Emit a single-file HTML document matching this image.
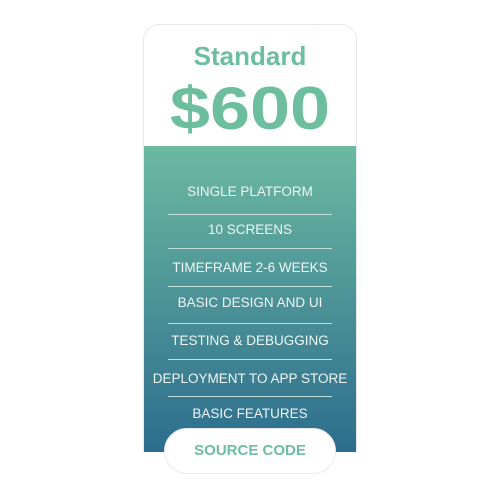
<!DOCTYPE html>
<html><head><style>
*{margin:0;padding:0;box-sizing:border-box}
body{width:500px;height:500px;background:#fff;position:relative;font-family:"Liberation Sans",sans-serif;overflow:hidden}
.card{position:absolute;left:143px;top:24px;width:214px;height:428px;border-radius:16px 16px 0 0;overflow:hidden;border:1px solid #e4e8ea;border-bottom:none}
.head{height:121px;background:#fff;text-align:center;color:#6dbd9f;font-weight:bold}
.t1{position:absolute;left:0;width:100%;top:16px;font-size:26px;text-align:center}
.t2{position:absolute;left:0;width:100%;top:49px;font-size:60px;text-align:center;transform:scaleX(1.2)}
.body{position:absolute;top:121px;left:0;width:100%;height:307px;background:linear-gradient(#6cb9a1,#2c6c8d)}
.row{position:absolute;left:0;width:100%;text-align:center;color:#eef6f4;font-size:13.5px}
.div{position:absolute;left:24px;width:164px;height:1px;background:#bfe0da}
.pill{position:absolute;left:164px;top:428px;width:172px;height:46px;border-radius:23px;background:#fff;border:1px solid #e8ecec;color:#6dbd9f;font-weight:bold;font-size:15px;text-align:center;line-height:44px}
</style></head><body>
<div class="card">
<div class="head"><div class="t1">Standard</div><div class="t2">$600</div></div>
<div class="body">
<div class="row" style="top:38px">SINGLE PLATFORM</div>
<div class="div" style="top:68px"></div>
<div class="row" style="top:76px">10 SCREENS</div>
<div class="div" style="top:102px"></div>
<div class="row" style="top:114px">TIMEFRAME 2-6 WEEKS</div>
<div class="div" style="top:140px"></div>
<div class="row" style="top:149px">BASIC DESIGN AND UI</div>
<div class="div" style="top:177px"></div>
<div class="row" style="top:187px">TESTING &amp; DEBUGGING</div>
<div class="div" style="top:213px"></div>
<div class="row" style="top:225px">DEPLOYMENT TO APP STORE</div>
<div class="div" style="top:250px"></div>
<div class="row" style="top:260px">BASIC FEATURES</div>
</div>
</div>
<div class="pill">SOURCE CODE</div>
</body></html>
